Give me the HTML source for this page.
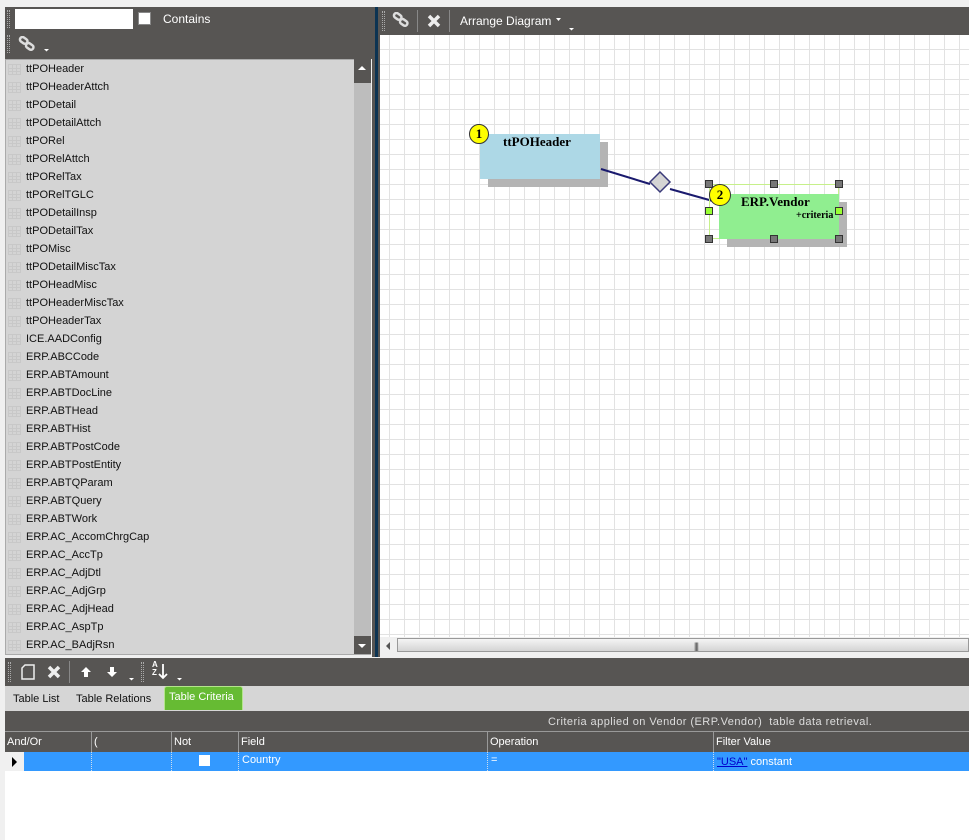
<!DOCTYPE html>
<html><head><meta charset="utf-8"><style>
*{box-sizing:border-box;margin:0;padding:0}
body{width:969px;height:840px;background:#f0f0f0;font-family:"Liberation Sans",Arial,sans-serif;font-size:11px;position:relative;overflow:hidden}
.abs{position:absolute}
.dark{background:#575553}
.grip{position:absolute;width:3px;border-left:1px dotted #aaa;border-right:1px dotted #aaa}
.row{position:absolute;left:5px;width:349px;height:18px;line-height:18px;color:#111;font-size:11px}
.ic{position:absolute;left:3px;top:4px;width:13px;height:11px;border:1px solid #c8c8c8;background:
linear-gradient(#c8c8c8,#c8c8c8) 0 3px/100% 1px no-repeat,linear-gradient(#c8c8c8,#c8c8c8) 0 6px/100% 1px no-repeat,linear-gradient(90deg,transparent 3px,#c8c8c8 3px,#c8c8c8 4px,transparent 4px,transparent 7px,#c8c8c8 7px,#c8c8c8 8px,transparent 8px)}
.row span{position:absolute;left:21px}
.w{color:#fff}
.hd{position:absolute;top:732px;height:20px;line-height:20px;color:#fff;border-left:1px solid #999;padding-left:2px;font-size:11px}
.cell{position:absolute;top:752px;height:19px;line-height:16px;color:#fff;border-left:1px dotted #cde;padding-left:3px}
.h{position:absolute;width:8px;height:8px;background:#777;border:1px solid #333}
</style></head><body>
<div class="abs dark" style="left:5px;top:7px;width:367px;height:52px"></div>
<div class="grip" style="left:7px;top:10px;height:18px"></div>
<div class="abs" style="left:15px;top:9px;width:118px;height:20px;background:#fff"></div>
<div class="abs" style="left:138px;top:12px;width:13px;height:13px;border:1px solid #888;background:#fff"></div>
<div class="abs w" style="left:163px;top:12px;font-size:12px">Contains</div>
<div class="grip" style="left:7px;top:35px;height:18px"></div>
<svg class="abs" style="left:18px;top:36px" width="40" height="18"><g stroke="#ddd" stroke-width="2.5" fill="none"><rect x="2" y="2" width="8" height="5" rx="2.5" transform="rotate(35 6 4)"/><rect x="8" y="8" width="8" height="5" rx="2.5" transform="rotate(35 12 10)"/></g><path d="M26 13h5l-2.5 2.5z" fill="#fff"/></svg>
<div class="abs" style="left:5px;top:59px;width:366px;height:596px;background:#d4d4d4;border:1px solid #aaa"></div>
<div class="abs" style="left:354px;top:59px;width:17px;height:595px;background:#bdbdbd"></div>
<div class="abs" style="left:354px;top:59px;width:17px;height:24px;background:#575553"></div>
<svg class="abs" style="left:356px;top:64px" width="12" height="8"><path d="M2 6h8L6 2z" fill="#fff"/></svg>
<div class="abs" style="left:354px;top:636px;width:17px;height:18px;background:#575553"></div>
<svg class="abs" style="left:356px;top:642px" width="12" height="8"><path d="M2 2h8L6 6z" fill="#fff"/></svg>
<div id="list"></div>
<script>
var n=["ttPOHeader","ttPOHeaderAttch","ttPODetail","ttPODetailAttch","ttPORel","ttPORelAttch","ttPORelTax","ttPORelTGLC","ttPODetailInsp","ttPODetailTax","ttPOMisc","ttPODetailMiscTax","ttPOHeadMisc","ttPOHeaderMiscTax","ttPOHeaderTax","ICE.AADConfig","ERP.ABCCode","ERP.ABTAmount","ERP.ABTDocLine","ERP.ABTHead","ERP.ABTHist","ERP.ABTPostCode","ERP.ABTPostEntity","ERP.ABTQParam","ERP.ABTQuery","ERP.ABTWork","ERP.AC_AccomChrgCap","ERP.AC_AccTp","ERP.AC_AdjDtl","ERP.AC_AdjGrp","ERP.AC_AdjHead","ERP.AC_AspTp","ERP.AC_BAdjRsn"];
var h="";n.forEach(function(t,i){h+='<div class="row" style="top:'+(60+i*18)+'px"><div class="ic"></div><span>'+t+'</span></div>'});
document.getElementById("list").innerHTML=h;
</script>
<div class="abs" style="left:372px;top:7px;width:8px;height:650px;background:#575553"></div>
<div class="abs" style="left:375px;top:7px;width:3px;height:650px;background:#0c3352"></div>
<div class="abs dark" style="left:380px;top:7px;width:589px;height:28px"></div>
<div class="grip" style="left:382px;top:11px;height:20px"></div>
<svg class="abs" style="left:392px;top:12px" width="20" height="18"><g stroke="#ddd" stroke-width="2.5" fill="none"><rect x="2" y="2" width="8" height="5" rx="2.5" transform="rotate(35 6 4)"/><rect x="8" y="8" width="8" height="5" rx="2.5" transform="rotate(35 12 10)"/></g></svg>
<div class="abs" style="left:417px;top:10px;width:1px;height:22px;background:#888"></div>
<svg class="abs" style="left:426px;top:13px" width="16" height="16"><path d="M3 3L13 13M13 3L3 13" stroke="#eee" stroke-width="3.5"/></svg>
<div class="abs" style="left:449px;top:10px;width:1px;height:22px;background:#888"></div>
<div class="abs w" style="left:460px;top:14px;font-size:12px">Arrange Diagram</div>
<svg class="abs" style="left:555px;top:16px" width="24" height="16"><path d="M1 2h5l-2.5 3z" fill="#fff"/><path d="M14 12h5l-2.5 2.5z" fill="#fff"/></svg>
<div class="abs" style="left:380px;top:35px;width:589px;height:602px;background-color:#fff;background-image:linear-gradient(90deg,#e2e2e2 1px,transparent 1px),linear-gradient(#e2e2e2 1px,transparent 1px);background-size:15px 15px;background-position:9px 14px"></div>
<div class="abs" style="left:380px;top:637px;width:589px;height:17px;background:#f0f0f0"></div>
<svg class="abs" style="left:384px;top:641px" width="8" height="10"><path d="M6 1v8L2 5z" fill="#555"/></svg>
<div class="abs" style="left:397px;top:638px;width:572px;height:14px;border:1px solid #999;background:linear-gradient(#f4f4f4,#d4d4d4)"></div>
<div class="abs" style="left:694px;top:641px;font-size:9px;color:#444;letter-spacing:-1px">|||</div>
<div class="abs" style="left:488px;top:142px;width:120px;height:45px;background:#b4b4b4"></div>
<div class="abs" style="left:480px;top:134px;width:120px;height:45px;background:#add8e6"></div>
<div class="abs" style="left:503px;top:134px;font-family:'Liberation Serif',serif;font-weight:bold;font-size:13px">ttPOHeader</div>
<div class="abs" style="left:469px;top:124px;width:20px;height:20px;border-radius:50%;background:#ffff00;border:1px solid #333;text-align:center;line-height:18px;font-family:'Liberation Serif',serif;font-weight:bold;font-size:13px">1</div>
<svg class="abs" style="left:380px;top:35px" width="589" height="602"><path d="M221 134L270 149M290 154L340 168" stroke="#1a1a6e" stroke-width="2"/><path d="M280 137l10 10l-10 10l-10-10z" fill="#d4d4d4" stroke="#3a3a7a" stroke-width="1.5"/></svg>
<div class="abs" style="left:727px;top:202px;width:120px;height:45px;background:#b4b4b4"></div>
<div class="abs" style="left:709px;top:184px;width:130px;height:55px;border:1px solid #c6f08a"></div>
<div class="abs" style="left:719px;top:194px;width:120px;height:45px;background:#90ee90"></div>
<div class="abs" style="left:741px;top:194px;font-family:'Liberation Serif',serif;font-weight:bold;font-size:13px">ERP.Vendor</div>
<div class="abs" style="left:796px;top:210px;font-family:'Liberation Serif',serif;font-weight:bold;font-size:10px">+criteria</div>
<div class="abs" style="left:709px;top:184px;width:22px;height:22px;border-radius:50%;background:#ffff00;border:1px solid #333;text-align:center;line-height:20px;font-family:'Liberation Serif',serif;font-weight:bold;font-size:13px">2</div>
<div class="h" style="left:705px;top:180px"></div><div class="h" style="left:770px;top:180px"></div><div class="h" style="left:835px;top:180px"></div>
<div class="h" style="left:705px;top:207px;background:#9f3"></div><div class="h" style="left:835px;top:207px;background:#9f3"></div>
<div class="h" style="left:705px;top:235px"></div><div class="h" style="left:770px;top:235px"></div><div class="h" style="left:835px;top:235px"></div>
<div class="abs dark" style="left:5px;top:658px;width:964px;height:28px"></div>
<div class="grip" style="left:8px;top:662px;height:20px"></div>
<svg class="abs" style="left:20px;top:663px" width="16" height="18"><path d="M5 2h9v14H2V5z" fill="none" stroke="#eee" stroke-width="1.5"/></svg>
<svg class="abs" style="left:46px;top:664px" width="16" height="16"><path d="M3 3L13 13M13 3L3 13" stroke="#eee" stroke-width="3.5"/></svg>
<div class="abs" style="left:69px;top:661px;width:1px;height:22px;background:#888"></div>
<svg class="abs" style="left:80px;top:666px" width="12" height="12"><path d="M6 1L11 6H8v5H4V6H1z" fill="#fff"/></svg>
<svg class="abs" style="left:106px;top:666px" width="12" height="12"><path d="M6 11L11 6H8V1H4v5H1z" fill="#fff"/></svg>
<svg class="abs" style="left:128px;top:677px" width="8" height="5"><path d="M1 1h5l-2.5 2.5z" fill="#fff"/></svg>
<div class="grip" style="left:141px;top:662px;height:20px"></div>
<div class="abs w" style="left:152px;top:661px;font-size:8px;line-height:8px;font-weight:bold">A<br>Z</div>
<svg class="abs" style="left:158px;top:663px" width="12" height="18"><path d="M5 1v14M1 11l4 4l4-4" stroke="#fff" stroke-width="1.8" fill="none"/></svg>
<svg class="abs" style="left:176px;top:677px" width="8" height="5"><path d="M1 1h5l-2.5 2.5z" fill="#fff"/></svg>
<div class="abs" style="left:5px;top:686px;width:964px;height:25px;background:#d6d6d6"></div>
<div class="abs" style="left:13px;top:693px;font-size:11px;color:#111">Table List</div>
<div class="abs" style="left:76px;top:693px;font-size:11px;color:#111">Table Relations</div>
<div class="abs" style="left:164px;top:686px;width:79px;height:24px;background:#66bb33;border:1px solid #b4e58c;border-bottom:none;border-radius:3px 3px 0 0"></div>
<div class="abs w" style="left:169px;top:691px;font-size:11px">Table Criteria</div>
<div class="abs" style="left:5px;top:711px;width:964px;height:129px;background:#fff"></div>
<div class="abs dark" style="left:5px;top:711px;width:964px;height:41px"></div>
<div class="abs" style="left:548px;top:716px;color:#ddd;font-size:11px;letter-spacing:0.45px">Criteria applied on Vendor (ERP.Vendor)&nbsp; table data retrieval.</div>
<div class="abs" style="left:5px;top:731px;width:964px;height:1px;background:#999"></div>
<div class="hd" style="left:5px;border:none">And/Or</div>
<div class="hd" style="left:91px">(</div>
<div class="hd" style="left:171px">Not</div>
<div class="hd" style="left:238px">Field</div>
<div class="hd" style="left:487px">Operation</div>
<div class="hd" style="left:713px">Filter Value</div>
<div class="abs" style="left:5px;top:752px;width:964px;height:19px;background:#3399ff"></div>
<div class="abs" style="left:5px;top:752px;width:19px;height:19px;background:#f0f0f0"></div>
<svg class="abs" style="left:10px;top:756px" width="8" height="12"><path d="M2 1v10l5-5z" fill="#000"/></svg>
<div class="cell" style="left:91px"></div><div class="cell" style="left:171px"></div>
<div class="abs" style="left:199px;top:755px;width:11px;height:11px;background:#fff"></div>
<div class="cell" style="left:238px">Country</div>
<div class="cell" style="left:487px">=</div>
<div class="cell" style="left:713px;line-height:20px"><span style="color:#00c;text-decoration:underline">"USA"</span> constant</div>
</body></html>
